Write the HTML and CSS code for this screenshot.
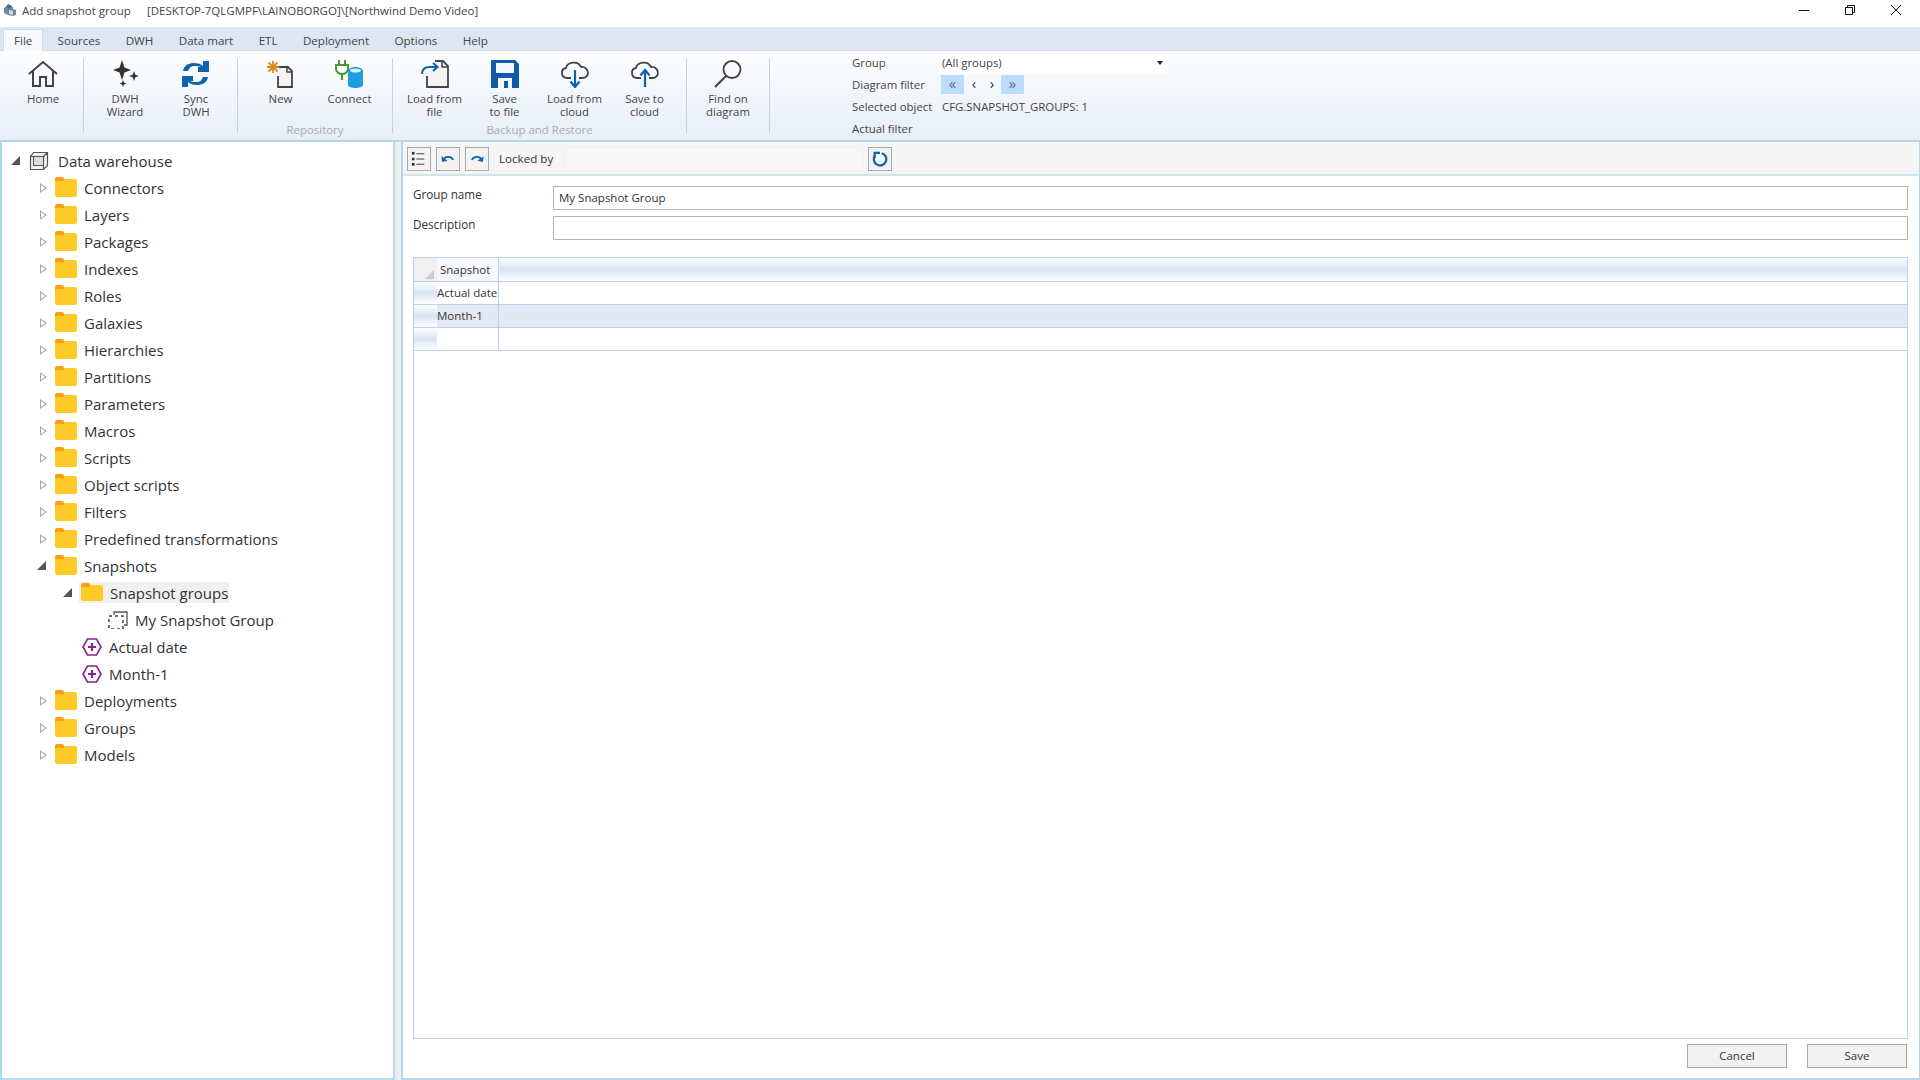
FILE: index.html
```html
<!DOCTYPE html>
<html lang="en">
<head>
<meta charset="utf-8">
<title>Add snapshot group</title>
<link rel="stylesheet" href="styles.css">
</head>
<body>
<div class="app">
  <header class="titlebar">
    <svg class="app-icon" viewBox="0 0 14 14"><path d="M1 5l5-3 4 2v2l3 1v5l-3 1-5-1-4-2z" fill="#6f8b9c"/><path d="M5 1l4 2-3 3-3-2z" fill="#2e6f9e"/><path d="M6 7l4 1v4l-4-1z" fill="#cfdbe3"/></svg>
    <span class="title-main">Add snapshot group</span>
    <span class="title-path">[DESKTOP-7QLGMPF\LAINOBORGO]\[Northwind Demo Video]</span>
    <div class="winctl">
      <svg viewBox="0 0 12 12"><path d="M1 6.500h10" stroke="#111" fill="none"/></svg>
      <svg viewBox="0 0 12 12"><path d="M1.500 3.500h7v7h-7zM3.500 3.500v-2h7v7h-2" stroke="#111" fill="none"/></svg>
      <svg viewBox="0 0 12 12"><path d="M1 1l10 10M11 1L1 11" stroke="#111" fill="none"/></svg>
    </div>
  </header>
  <nav class="tabs">
    <span class="tab active">File</span>
    <span class="tab">Sources</span>
    <span class="tab">DWH</span>
    <span class="tab">Data mart</span>
    <span class="tab">ETL</span>
    <span class="tab">Deployment</span>
    <span class="tab">Options</span>
    <span class="tab">Help</span>
  </nav>
  <section class="ribbon">
    <div class="group g-home">
      <div class="btns">
        <div class="rbtn w76">
          <svg class="ricon" viewBox="0 0 32 28"><path d="M2 14L16 2l14 12M6 11v15h7v-9h6v9h7V11" fill="none" stroke="#444" stroke-width="2"/></svg>
          <span>Home</span>
        </div>
      </div>
    </div>
    <i class="sep"></i>
    <div class="group g-dwh">
      <div class="btns">
        <div class="rbtn w71">
          <svg class="ricon" viewBox="0 0 32 28"><path d="M13 0l2.500 7.500L22 10l-6.500 2.500L13 20l-2.500-7.500L4 10l6.500-2.500z" fill="#333"/><path d="M25 11l1.300 3.700L30 16l-3.700 1.300L25 21l-1.300-3.700L20 16l3.700-1.300zM14 20l1 2.500 2.500 1-2.500 1-1 2.500-1-2.500-2.500-1 2.500-1z" fill="#333"/></svg>
          <span>DWH<br>Wizard</span>
        </div>
        <div class="rbtn w71">
          <svg class="ricon" viewBox="0 0 32 28"><path d="M3 11C4 5 9 3 14 3c4 0 7 1 9 3V1l6 0v11H18V7l3 0C19 6 17 6 14 6c-3 0-5 2-6 5z" fill="#0f62ad"/><path d="M28 17c-1 6-6 8-11 8-4 0-7-1-9-3v5H2V16h11v5l-3 0c2 1 4 1 7 1 3 0 5-2 6-5z" fill="#0f62ad"/></svg>
          <span>Sync<br>DWH</span>
        </div>
      </div>
    </div>
    <i class="sep"></i>
    <div class="group g-repo">
      <div class="btns">
        <div class="rbtn w69">
          <svg class="ricon" viewBox="0 0 32 28"><path d="M14 7h9l4 4v16H13V16" fill="#f4f4f4" stroke="#444" stroke-width="1.800"/><path d="M22 7v5h5" fill="none" stroke="#444" stroke-width="1.500"/><path d="M8 1v12M2 7h12M3.500 2.500l9 9M12.500 2.500l-9 9" stroke="#d98a14" stroke-width="1.800"/></svg>
          <span>New</span>
        </div>
        <div class="rbtn w69">
          <svg class="ricon" viewBox="0 0 32 28"><path d="M5 0v6M11 0v6M2 5h12v4c0 3-3 5-6 5s-6-2-6-5zM8 14v6" fill="none" stroke="#4a9a2f" stroke-width="2"/><path d="M14 11c0-2 4-4 7.500-4s7.500 2 7.500 4v14c0 2-4 3-7.500 3S14 27 14 25z" fill="#1d9de0"/><ellipse cx="21.500" cy="10.500" rx="5.500" ry="2" fill="#d8effa"/></svg>
          <span>Connect</span>
        </div>
      </div>
      <div class="glabel">Repository</div>
    </div>
    <i class="sep"></i>
    <div class="group g-backup">
      <div class="btns">
        <div class="rbtn w70">
          <svg class="ricon" viewBox="0 0 32 28"><path d="M16 1h8l5 5v21H8V16" fill="#f4f4f4" stroke="#444" stroke-width="1.800"/><path d="M23 1v6h6" fill="none" stroke="#444" stroke-width="1.500"/><path d="M3 14c0-5 3-7 8-7h7M14 3l4.500 4-4.500 4" fill="none" stroke="#0f62ad" stroke-width="2.200"/></svg>
          <span>Load from<br>file</span>
        </div>
        <div class="rbtn w70">
          <svg class="ricon" viewBox="0 0 32 28"><path d="M2 0h24l4 4v24H2z" fill="#0f5ba8"/><rect x="7" y="3" width="18" height="10" fill="#f4f7fb"/><rect x="9" y="18" width="14" height="10" fill="#f4f7fb"/><rect x="15" y="21" width="4" height="7" fill="#0f5ba8"/></svg>
          <span>Save<br>to file</span>
        </div>
        <div class="rbtn w70">
          <svg class="ricon" viewBox="0 0 32 28"><path d="M12 18H8c-6 0-7-9-1-10 1-6 12-8 15-1 8-1 10 11 1 11h-3" fill="none" stroke="#444" stroke-width="1.800"/><path d="M16 10v16M11.500 21.500L16 27l4.500-5.500" fill="none" stroke="#0f62ad" stroke-width="2.200"/></svg>
          <span>Load from<br>cloud</span>
        </div>
        <div class="rbtn w70">
          <svg class="ricon" viewBox="0 0 32 28"><path d="M12 18H8c-6 0-7-9-1-10 1-6 12-8 15-1 8-1 10 11 1 11h-3" fill="none" stroke="#444" stroke-width="1.800"/><path d="M16 27V11M11.500 15.500L16 10l4.500 5.500" fill="none" stroke="#0f62ad" stroke-width="2.200"/></svg>
          <span>Save to<br>cloud</span>
        </div>
      </div>
      <div class="glabel">Backup and Restore</div>
    </div>
    <i class="sep"></i>
    <div class="group g-find">
      <div class="btns">
        <div class="rbtn w76">
          <svg class="ricon" viewBox="0 0 32 28"><circle cx="20" cy="9.500" r="8.500" fill="none" stroke="#444" stroke-width="1.800"/><path d="M14 16L3 27" stroke="#444" stroke-width="2.200"/></svg>
          <span>Find on<br>diagram</span>
        </div>
      </div>
    </div>
    <i class="sep"></i>
    <div class="filter">
      <span>Group</span>
      <div class="combo">(All groups)<i class="caret"></i></div>
      <span>Diagram filter</span>
      <div class="nav-btns">
        <b class="nav on">«</b><b class="nav">‹</b><b class="nav">›</b><b class="nav on">»</b>
      </div>
      <span>Selected object</span>
      <span class="val">CFG.SNAPSHOT_GROUPS: 1</span>
      <span>Actual filter</span>
      <span></span>
    </div>
  </section>
  <main class="main">
    <aside class="tree">
      <div class="row root"><i class="arrow open"></i><svg class="ico-root" viewBox="0 0 20 20"><path d="M4.500 1.500h14v13l-4 4h-13v-13zM4.500 5.500h10v13M14.500 5.500l4-4M1.500 5.500l3 0" fill="#f2f2f2" stroke="#555" stroke-width="1.200"/><rect x="4.500" y="5.500" width="10" height="9" fill="#ddd" stroke="#555"/></svg><span class="lbl">Data warehouse</span></div>
      <div class="row l1"><i class="arrow"></i><i class="folder"></i><span class="lbl">Connectors</span></div>
      <div class="row l1"><i class="arrow"></i><i class="folder"></i><span class="lbl">Layers</span></div>
      <div class="row l1"><i class="arrow"></i><i class="folder"></i><span class="lbl">Packages</span></div>
      <div class="row l1"><i class="arrow"></i><i class="folder"></i><span class="lbl">Indexes</span></div>
      <div class="row l1"><i class="arrow"></i><i class="folder"></i><span class="lbl">Roles</span></div>
      <div class="row l1"><i class="arrow"></i><i class="folder"></i><span class="lbl">Galaxies</span></div>
      <div class="row l1"><i class="arrow"></i><i class="folder"></i><span class="lbl">Hierarchies</span></div>
      <div class="row l1"><i class="arrow"></i><i class="folder"></i><span class="lbl">Partitions</span></div>
      <div class="row l1"><i class="arrow"></i><i class="folder"></i><span class="lbl">Parameters</span></div>
      <div class="row l1"><i class="arrow"></i><i class="folder"></i><span class="lbl">Macros</span></div>
      <div class="row l1"><i class="arrow"></i><i class="folder"></i><span class="lbl">Scripts</span></div>
      <div class="row l1"><i class="arrow"></i><i class="folder"></i><span class="lbl">Object scripts</span></div>
      <div class="row l1"><i class="arrow"></i><i class="folder"></i><span class="lbl">Filters</span></div>
      <div class="row l1"><i class="arrow"></i><i class="folder"></i><span class="lbl">Predefined transformations</span></div>
      <div class="row l1"><i class="arrow open"></i><i class="folder"></i><span class="lbl">Snapshots</span></div>
      <div class="row l2"><i class="arrow open"></i><span class="sel"><i class="folder"></i><span class="lbl">Snapshot groups</span></span></div>
      <div class="row l3"><svg class="ico-leaf" viewBox="0 0 20 18"><path d="M6 4V1h13v13h-3" fill="none" stroke="#555" stroke-width="1.300"/><path d="M1 5h14v13H1z" fill="none" stroke="#444" stroke-width="1.500" stroke-dasharray="3 3"/></svg><span class="lbl">My Snapshot Group</span></div>
      <div class="row l2 leaf"><svg class="ico-hex" viewBox="0 0 20 18"><path d="M5.500 1h9l4.500 8-4.500 8h-9L1 9z" fill="#fff" stroke="#8c1e94" stroke-width="1.600"/><path d="M10 5v8M6 9h8" stroke="#8c1e94" stroke-width="2.200"/></svg><span class="lbl">Actual date</span></div>
      <div class="row l2 leaf"><svg class="ico-hex" viewBox="0 0 20 18"><path d="M5.500 1h9l4.500 8-4.500 8h-9L1 9z" fill="#fff" stroke="#8c1e94" stroke-width="1.600"/><path d="M10 5v8M6 9h8" stroke="#8c1e94" stroke-width="2.200"/></svg><span class="lbl">Month-1</span></div>
      <div class="row l1"><i class="arrow"></i><i class="folder"></i><span class="lbl">Deployments</span></div>
      <div class="row l1"><i class="arrow"></i><i class="folder"></i><span class="lbl">Groups</span></div>
      <div class="row l1"><i class="arrow"></i><i class="folder"></i><span class="lbl">Models</span></div>
    </aside>
    <section class="panel">
      <div class="toolbar">
        <span class="tbtn"><svg viewBox="0 0 18 18"><path d="M6 3h9M6 9h9M6 15h9" stroke="#444" stroke-width="1.200"/><rect x="1" y="1" width="3" height="3" fill="#333"/><rect x="1" y="7.500" width="3" height="3" fill="#333"/><rect x="1" y="13.500" width="3" height="3" fill="#333"/></svg></span>
        <span class="tbtn"><svg viewBox="0 0 18 18"><path d="M4 10c1-4 8-5 11 0" fill="none" stroke="#0f62ad" stroke-width="2"/><path d="M1.500 6l1 6.500 6-1.500z" fill="#0f62ad"/></svg></span>
        <span class="tbtn"><svg viewBox="0 0 18 18"><path d="M14 10c-1-4-8-5-11 0" fill="none" stroke="#0f62ad" stroke-width="2"/><path d="M16.500 6l-1 6.500-6-1.500z" fill="#0f62ad"/></svg></span>
        <span class="locked">Locked by</span>
        <span class="locked-input"></span>
        <span class="tbtn"><svg viewBox="0 0 18 18"><path d="M11 2.500a7 7 0 1 1-7.500 2.500" fill="none" stroke="#0f62ad" stroke-width="2.500"/><path d="M3 8V2h6" fill="none" stroke="#0f62ad" stroke-width="2.500"/></svg></span>
      </div>
      <div class="form">
        <div class="field"><label>Group name</label><div class="input">My Snapshot Group</div></div>
        <div class="field"><label>Description</label><div class="input"></div></div>
        <div class="grid">
          <div class="grow head">
            <div class="ind corner"></div><div class="c1">Snapshot</div><div class="c2"></div>
          </div>
          <div class="grow"><div class="ind"></div><div class="c1">Actual date</div><div class="c2"></div></div>
          <div class="grow selrow"><div class="ind"></div><div class="c1">Month-1</div><div class="c2"></div></div>
          <div class="grow"><div class="ind"></div><div class="c1"></div><div class="c2"></div></div>
        </div>
        <div class="actions">
          <span class="btn">Cancel</span>
          <span class="btn">Save</span>
        </div>
      </div>
    </section>
  </main>
</div>
</body>
</html>
```
FILE: styles.css
```css
* { box-sizing: border-box; }
html, body { margin: 0; height: 100%; background: #fff; }
body { font-family: "Open Sans", "Noto Sans", sans-serif; color: #333; overflow: hidden; }
i { display: block; font-style: normal; }
.app { width: 1920px; height: 1080px; display: flex; flex-direction: column; }

.titlebar { height: 27px; display: flex; align-items: center; font-size: 11.500px; color: #444; padding: 0 0 7px 3px; flex: none; }
.app-icon { width: 14px; height: 14px; margin-right: 5px; }
.title-main { width: 125px; }
.winctl { margin-left: auto; display: flex; gap: 34px; padding-right: 18px; }
.winctl svg { width: 12px; height: 12px; }

.tabs { height: 24px; flex: none; background: #dde7f3; display: flex; font-size: 11.600px; color: #444; padding-left: 3px; border-bottom: 1px solid #d2dde9; }
.tab { height: 24px; line-height: 28px; padding: 0 12.700px; }
.tab.active { background: #f6f9fd; border: 1px solid #cfdcea; border-bottom: 0; border-radius: 2px 2px 0 0; margin-top: 2px; height: 22px; line-height: 22px; padding: 0 10px; margin-right: 1.500px; }

.ribbon { height: 89px; flex: none; display: flex; background: linear-gradient(#fdfeff, #e7eef7); font-size: 11.400px; color: #444; }
.group { height: 89px; padding-top: 9px; display: flex; flex-direction: column; }
.g-home { width: 83px; padding-left: 5px; }
.g-dwh { width: 153px; }
.g-repo { width: 154px; }
.g-backup { width: 293px; }
.g-find { width: 82px; }
.btns { display: flex; justify-content: center; }
.g-home .btns { justify-content: flex-start; }
.rbtn { display: flex; flex-direction: column; align-items: center; text-align: center; line-height: 13px; }
.rbtn span { margin-top: 4px; }
.w76 { width: 76px; }
.w71 { width: 71px; }
.w69 { width: 69px; }
.w70 { width: 70px; }
.ricon { width: 32px; height: 28px; }
.glabel { margin-top: auto; text-align: center; color: #aaa; line-height: 15px; padding-bottom: 3px; }
.sep { width: 1px; height: 75px; margin-top: 7px; background: #c3d2e2; flex: none; }

.filter { margin-left: 82px; display: grid; grid-template-columns: 88px 228px; grid-auto-rows: 22px; align-items: center; align-content: start; }
.combo { height: 21px; background: #fff; padding-left: 2px; line-height: 21px; position: relative; }
.caret { position: absolute; right: 5px; top: 9px; border: 3px solid transparent; border-top: 4px solid #222; border-bottom: 0; }
.nav-btns { display: flex; margin-left: 1px; }
.nav { width: 18px; height: 19px; line-height: 16px; text-align: center; font-weight: 400; font-size: 15px; color: #333; }
.nav.on { width: 23px; background: #bcdcfb; color: #667; }
.nav.on:first-child { margin-right: 1px; }
.val { padding-left: 2px; }

.main { flex: 1; display: flex; border-top: 2px solid #b7d5e6; min-height: 0; background: #eee; }
.tree { width: 395px; flex: none; border-left: 2px solid #a9d9ec; border-right: 2px solid #b7dcea; border-bottom: 2px solid #b7dcea; padding-top: 5px; background: #fff; font-size: 15px; color: #333; }
.row { height: 27px; display: flex; align-items: center; }
.root { padding-left: 9px; }
.l1 { padding-left: 35px; }
.l2 { padding-left: 61px; }
.l2.leaf { padding-left: 80px; }
.l3 { padding-left: 106px; }
.arrow { width: 0; height: 0; border-style: solid; border-width: 5px 0 5px 7px; border-color: transparent transparent transparent #aaa; margin-right: 8px; margin-left: 3px; position: relative; }
.arrow::after { content: ""; position: absolute; left: -6px; top: -3px; border-style: solid; border-width: 3px 0 3px 4px; border-color: transparent transparent transparent #fff; }
.arrow.open { border-width: 0 0 9px 9px; border-color: transparent transparent #555 transparent; margin-right: 9px; margin-left: 0; }
.arrow.open::after { display: none; }
.folder { width: 22px; height: 18px; background: #ffc928; border-radius: 2px; position: relative; margin-top: 1px; margin-right: 7px; }
.folder::before { content: ""; position: absolute; left: 0; top: -2px; width: 9px; height: 4px; background: #fb9f12; border-radius: 2px 2px 0 0; }
.sel { display: flex; align-items: center; background: #f0f0f0; height: 21px; padding-right: 1px; margin-left: -2px; padding-left: 2px; }
.sel .folder { height: 16px; }
.ico-root { width: 20px; height: 20px; margin-right: 9px; }
.ico-leaf { width: 20px; height: 18px; margin-right: 7px; }
.ico-hex { width: 20px; height: 18px; margin-right: 7px; }

.panel { flex: 1; border-left: 2px solid #b7d5e6; border-bottom: 2px solid #b7d5e6; border-right: 1px solid #b7d5e6; margin-left: 6px; display: flex; flex-direction: column; min-width: 0; }
.toolbar { height: 34px; flex: none; background: #f5f5f5; border-bottom: 2px solid #cfe3ef; display: flex; align-items: flex-start; padding: 5px 0 0 4px; gap: 5px; font-size: 11.600px; }
.tbtn { width: 24px; height: 24px; border: 1px solid #aaa; background: #f3f3f3; display: flex; align-items: center; justify-content: center; }
.tbtn svg { width: 16px; height: 16px; }
.locked { margin-left: 5px; width: 60px; line-height: 24px; }
.locked-input { width: 299px; height: 24px; border: 1px solid #f0f0f0; background: #f7f7f7; }
.form { flex: 1; display: flex; flex-direction: column; padding: 10px 11px 10px 10px; background: #fff; min-height: 0; font-size: 11.500px; }
.field { display: flex; height: 24px; margin-bottom: 6px; }
.field label { width: 140px; line-height: 17px; font-size: 11.700px; }
.input { flex: 1; border: 1px solid #b5b5b5; line-height: 22px; padding-left: 5px; }
.grid { flex: 1; margin-top: 11px; border: 1px solid #b9d0f2; min-height: 0; }
.grow { display: flex; height: 23px; border-bottom: 1px solid #b9d0f2; }
.grow.head { height: 24px; }
.ind { width: 23px; flex: none; background: linear-gradient(#fff, #d7e4f5 50%, #fff); position: relative; }
.ind.corner { background: #f0f0f0; }
.ind.corner::after { content: ""; position: absolute; right: 3px; bottom: 2px; border-style: solid; border-width: 0 0 9px 9px; border-color: transparent transparent #ccc transparent; }
.c1 { width: 62px; flex: none; border-right: 1px solid #b9d0f2; line-height: 22px; white-space: nowrap; overflow: hidden; }
.head .c1 { padding-left: 3px; background: #f6f8fb; line-height: 23px; }
.c2 { flex: 1; }
.head .c2 { background: linear-gradient(#fff, #d7e4f5 50%, #fff); }
.selrow { background: #e4e8f0; }
.actions { display: flex; justify-content: flex-end; gap: 20px; margin-top: 5px; flex: none; padding-right: 1px; }
.btn { width: 100px; height: 24px; border: 1px solid #aaa; background: #f2f2f2; text-align: center; line-height: 22px; }
```
